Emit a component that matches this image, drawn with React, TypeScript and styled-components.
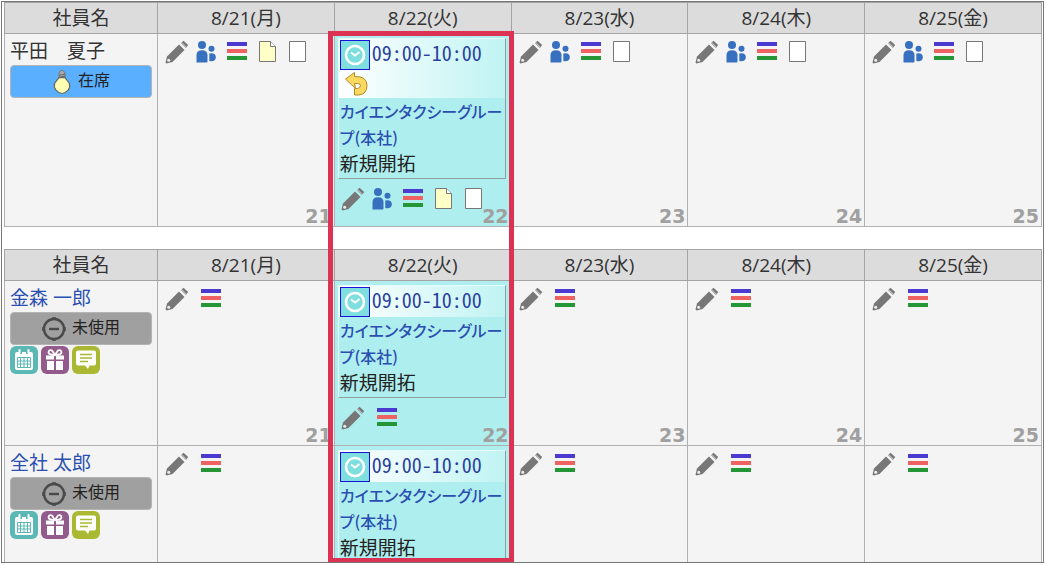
import React from "react";
import styled, { createGlobalStyle } from "styled-components";

const GlobalStyle = createGlobalStyle`
  *, *::before, *::after { box-sizing: border-box; }
  body {
    margin: 0;
    background: #fff;
    color: #333;
    font-family: "Open Sans", "Noto Sans CJK JP", sans-serif;
    font-size: 19px;
    line-height: 27px;
  }
  a { color: #2a4fb0; text-decoration: none; }
  svg { display: block; }
`;

const NAME_COL = "153px";

const Page = styled.main`
  height: 100vh;
  padding: 1px 1px 2px;
  overflow: hidden;
`;

const Frame = styled.div`
  height: 100%;
  overflow: hidden;
  border: 1px solid #777;
  padding: 0 1px 0 2px;
  background: #fff;
`;

const Board = styled.div`
  position: relative;
  height: 100%;
  display: flex;
  flex-direction: column;
  gap: 22px;
`;

const DayHighlight = styled.div`
  position: absolute;
  z-index: 2;
  top: 29px;
  bottom: -1px;
  left: calc(${NAME_COL} + (100% - ${NAME_COL}) / 5 - 6px);
  width: calc((100% - ${NAME_COL}) / 5 + 9px);
  border: 5px solid #dc3355;
  pointer-events: none;
`;

const ScheduleTable = styled.table`
  width: 100%;
  table-layout: fixed;
  border-collapse: collapse;
`;

const NameCol = styled.col`
  width: ${NAME_COL};
`;

const HeadCell = styled.th`
  height: 31px;
  padding: 0;
  border: 1px solid #a4a4a4;
  background: #dcdcdc;
  font-weight: 400;
`;

const NameCell = styled.td`
  padding: 4px 5px 0;
  border: 1px solid #b0b0b0;
  background: #f4f4f4;
  vertical-align: top;
`;

const DayCell = styled.td<{ $today?: boolean }>`
  position: relative;
  padding: ${(p) => (p.$today ? "4px 5px 15px 3px" : "6px 7px 15px")};
  border: 1px solid #b0b0b0;
  background: ${(p) => (p.$today ? "#afeeee" : "#f4f4f4")};
  vertical-align: top;
`;

const DayNumber = styled.span`
  position: absolute;
  right: 2px;
  bottom: 0;
  color: #a0a0a0;
  font: 700 19px/20px "DejaVu Sans", sans-serif;
`;

const EmployeeName = styled.div`
  white-space: pre;
`;

const StatusButton = styled.button<{ $present?: boolean }>`
  display: flex;
  align-items: center;
  justify-content: center;
  gap: 6px;
  width: 100%;
  height: 33px;
  padding: 0;
  border: 1px solid #b4b4b4;
  border-radius: 4px;
  background: ${(p) => (p.$present ? "#5aafff" : "#a0a0a0")};
  color: #222;
  font: 16px/24px "Open Sans", "Noto Sans CJK JP", sans-serif;
`;

const StatusText = styled.span`
  padding-bottom: 4px;
`;

const Shortcuts = styled.div`
  display: flex;
  gap: 3px;
  padding-top: 1px;
`;

const ShortcutButton = styled.button<{ $color: string }>`
  width: 28px;
  height: 28px;
  padding: 0;
  border: 0;
  border-radius: 6px;
  background: ${(p) => p.$color};
`;

const Tools = styled.div<{ $wide?: boolean; $below?: boolean }>`
  display: flex;
  gap: ${(p) => (p.$wide ? "10px" : "6px")};
  padding: ${(p) => (p.$below ? "8px 3px 0" : "0")};
`;

const ToolButton = styled.button`
  width: 24px;
  height: 24px;
  padding: 0;
  border: 0;
  background: none;
`;

const EventCard = styled.article`
  border: 1px solid;
  border-color: #e6fcfc #8f9f9f #8f9f9f #e6fcfc;
  padding-left: 1px;
`;

const EventHead = styled.header`
  margin-left: -1px;
  padding: 1px 1px 0;
  background: linear-gradient(to right, #fff, #c0f3f3);
`;

const TimeRow = styled.div`
  display: flex;
  align-items: center;
  height: 30px;
  gap: 2px;
`;

const ClockBox = styled.span`
  padding: 2px;
  border: 1px solid #1414dc;
  background: #7fdfdf;
`;

const EventTime = styled.time`
  color: #2a3f9c;
  font: 400 20px/24px "Noto Sans CJK JP", monospace;
  font-feature-settings: "hwid";
  padding-bottom: 4px;
  white-space: nowrap;
`;

const ReturnMark = styled.div`
  height: 28px;
  padding: 1px 4px;
`;

const EventTitle = styled.a`
  display: block;
  font: 500 16px/26px "Noto Sans CJK JP", sans-serif;
  font-feature-settings: "palt";
  word-break: break-all;
`;

const EventNote = styled.div`
  height: 28px;
  line-height: 28px;
  color: #222;
`;

const PencilIcon = () => (
  <svg width="24" height="24" viewBox="0 0 24 24" aria-hidden="true">
    <path d="M2 16.500 14 4.500 19.500 10 7.500 22 1.500 23.500 .5 22.500Z" fill="#777" />
    <path d="M16 3 L18.5 .8 L23.2 5 L21 8Z" fill="#777" />
    <circle cx="3.7" cy="20.3" r="1.5" fill="#eee" />
    <path d="M16.4 2.2 L21.8 7.6" stroke="#eee" strokeWidth=".7" />
  </svg>
);

const PeopleIcon = () => (
  <svg width="24" height="24" viewBox="0 0 24 24" fill="#3870c0" aria-hidden="true">
    <circle cx="7" cy="5" r="4" />
    <path d="M1.500 22.500V15q0-4.700 5.500-4.700T12.500 15v6.500q0 1-1 1Z" />
    <circle cx="16.500" cy="8.800" r="3" />
    <path d="M14.300 21V13.500q6.500-1 6.500 3.700T14.300 21Z" />
  </svg>
);

const BarsIcon = () => (
  <svg width="24" height="24" viewBox="0 0 24 24" aria-hidden="true">
    <path d="M2 2h20v4H2z" fill="#4b3ad0" />
    <path d="M2 9h20v4H2z" fill="#ef6262" />
    <path d="M2 16h20v4H2z" fill="#249636" />
  </svg>
);

const NoteIcon = () => (
  <svg width="24" height="24" viewBox="0 0 24 24" aria-hidden="true">
    <path d="M4.5 1.5h11l5 5v15h-16z" fill="#ffffc8" stroke="#777" />
    <path d="M15.5 1.5v5h5" fill="#fff" stroke="#777" />
  </svg>
);

const BlankIcon = () => (
  <svg width="24" height="24" viewBox="0 0 24 24" aria-hidden="true">
    <path d="M4.5 1.5h16v20h-16z" fill="#fff" stroke="#777" />
  </svg>
);

const BulbIcon = () => (
  <svg width="20" height="26" viewBox="0 0 20 26" aria-hidden="true">
    <path d="M7 9V3.5L10 1l3 2.5V9Z" fill="#aaa" stroke="#777" />
    <path d="M7 6.3l6-1.2M7 8.3l6-1.2" stroke="#666" />
    <path d="M7 8.7h6l4.3 5.5q1.3 3.6-1.2 7Q13 24.5 10 24.5t-6-3.3q-2.600-3.400-1.300-7Z" fill="#ffffb4" stroke="#666" strokeWidth="1.200" />
  </svg>
);

const UnusedIcon = () => (
  <svg width="24" height="24" viewBox="0 0 24 24" fill="none" stroke="#4a4a4a" aria-hidden="true">
    <circle cx="12" cy="12" r="10" strokeWidth="2.400" />
    <path d="M7 12h10" strokeWidth="2.400" />
    <path d="M10 1h4M10 23h4M1 10v4M23 10v4" strokeWidth="1.500" />
  </svg>
);

const ClockIcon = () => (
  <svg width="24" height="24" viewBox="0 0 24 24" fill="none" stroke="#fff" aria-hidden="true">
    <circle cx="12" cy="12" r="9" strokeWidth="2.600" />
    <path d="M8 9.500l4 3 4.500-3.500" strokeWidth="1.800" />
  </svg>
);

const ReturnIcon = () => (
  <svg width="25" height="25" viewBox="0 0 25 25" aria-hidden="true">
    <path
      d="M1.500 8 10.500 1.500v4q12.500-.500 12.500 9 0 8.500-8 9.500h-4.500v-6.500h3q3-.500 3-3 0-2-3-2h-3l1 5Z"
      fill="#fbd960"
      stroke="#b08a28"
    />
  </svg>
);

const CalendarIcon = () => (
  <svg width="28" height="28" viewBox="0 0 28 28" aria-hidden="true">
    <path d="M5 8q0-2 2-2h2v2h3V6h4v2h3V6h2q2 0 2 2v14q0 2-2 2H7q-2 0-2-2Z" fill="#fff" />
    <path d="M9.500 4v3M18.500 4v3" stroke="#fff" strokeWidth="2" strokeLinecap="round" />
    <path d="M7.500 11.500h13v10h-13zM7.500 15h13M7.500 18h13M10.500 11.500v10M14 11.500v10M17.500 11.500v10" fill="none" stroke="#5cb8b4" />
  </svg>
);

const GiftIcon = () => (
  <svg width="28" height="28" viewBox="0 0 28 28" aria-hidden="true">
    <path d="M5 9.500h8v4H5zM15 9.500h8v4h-8zM6 15h7v9H6zM15 15h7v9h-7z" fill="#fff" />
    <path d="M14 9Q8 9 7.500 6.500 8 3 11 4.500L14 9l3-4.500Q20 3 20.500 6.500 20 9 14 9Z" fill="none" stroke="#fff" strokeWidth="1.800" />
  </svg>
);

const MemoIcon = () => (
  <svg width="28" height="28" viewBox="0 0 28 28" aria-hidden="true">
    <path d="M6 4.500h16q2 0 2 2v11q0 2-2 2h-4.500L16 23l-3-3.500H6q-2 0-2-2v-11q0-2 2-2Z" fill="#fff" />
    <path d="M8 8.500h12M8 12h12M8 15.500h8" stroke="#abb832" strokeWidth="1.400" />
  </svg>
);

const toolIcons = {
  編集: PencilIcon,
  参加者: PeopleIcon,
  一覧: BarsIcon,
  メモ: NoteIcon,
  用紙: BlankIcon,
};
type Tool = keyof typeof toolIcons;

const days = [
  { label: "8/21(月)", number: 21 },
  { label: "8/22(火)", number: 22 },
  { label: "8/23(水)", number: 23 },
  { label: "8/24(木)", number: 24 },
  { label: "8/25(金)", number: 25 },
];

type Employee = { name: string; self?: boolean; numbered?: boolean };

const ToolBar = ({ tools, below }: { tools: Tool[]; below?: boolean }) => (
  <Tools $wide={tools.length === 2} $below={below}>
    {tools.map((tool) => {
      const Icon = toolIcons[tool];
      return (
        <ToolButton key={tool} type="button" aria-label={tool}>
          <Icon />
        </ToolButton>
      );
    })}
  </Tools>
);

const Appointment = ({ returned }: { returned?: boolean }) => (
  <EventCard>
    <EventHead>
      <TimeRow>
        <ClockBox>
          <ClockIcon />
        </ClockBox>
        <EventTime>09:00-10:00</EventTime>
      </TimeRow>
      {returned && (
        <ReturnMark>
          <ReturnIcon />
        </ReturnMark>
      )}
    </EventHead>
    <EventTitle href="#">カイエンタクシーグループ(本社)</EventTitle>
    <EventNote>新規開拓</EventNote>
  </EventCard>
);

const EmployeeRow = ({ name, self, numbered }: Employee) => (
  <tr>
    <NameCell>
      <EmployeeName>{self ? name : <a href="#">{name}</a>}</EmployeeName>
      <StatusButton type="button" $present={self}>
        {self ? <BulbIcon /> : <UnusedIcon />}
        <StatusText>{self ? "在席" : "未使用"}</StatusText>
      </StatusButton>
      {!self && (
        <Shortcuts>
          <ShortcutButton type="button" $color="#5cb8b4" aria-label="予定">
            <CalendarIcon />
          </ShortcutButton>
          <ShortcutButton type="button" $color="#935a8c" aria-label="ギフト">
            <GiftIcon />
          </ShortcutButton>
          <ShortcutButton type="button" $color="#abb832" aria-label="伝言">
            <MemoIcon />
          </ShortcutButton>
        </Shortcuts>
      )}
    </NameCell>
    {days.map(({ number }) => {
      const today = number === 22;
      const tools: Tool[] = !self
        ? ["編集", "一覧"]
        : number <= 22
          ? ["編集", "参加者", "一覧", "メモ", "用紙"]
          : ["編集", "参加者", "一覧", "用紙"];
      return (
        <DayCell key={number} $today={today}>
          {today && <Appointment returned={self} />}
          <ToolBar tools={tools} below={today} />
          {numbered && <DayNumber>{number}</DayNumber>}
        </DayCell>
      );
    })}
  </tr>
);

const Schedule = ({ employees }: { employees: Employee[] }) => (
  <ScheduleTable>
    <colgroup>
      <NameCol />
      <col span={5} />
    </colgroup>
    <thead>
      <tr>
        <HeadCell scope="col">社員名</HeadCell>
        {days.map((day) => (
          <HeadCell key={day.number} scope="col">
            {day.label}
          </HeadCell>
        ))}
      </tr>
    </thead>
    <tbody>
      {employees.map((employee) => (
        <EmployeeRow key={employee.name} {...employee} />
      ))}
    </tbody>
  </ScheduleTable>
);

export default function App() {
  return (
    <>
      <GlobalStyle />
      <Page>
        <Frame>
          <Board>
            <Schedule employees={[{ name: "平田　夏子", self: true, numbered: true }]} />
            <Schedule
              employees={[{ name: "金森 一郎", numbered: true }, { name: "全社 太郎" }]}
            />
            <DayHighlight />
          </Board>
        </Frame>
      </Page>
    </>
  );
}
